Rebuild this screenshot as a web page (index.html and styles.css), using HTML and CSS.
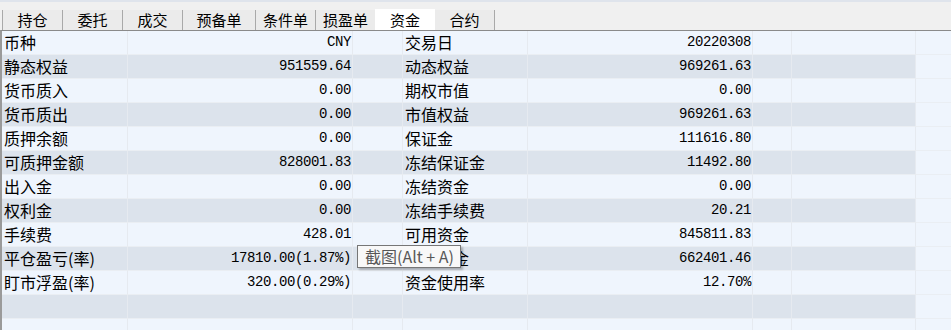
FILE: index.html
```html
<!DOCTYPE html>
<html>
  <head>
    <meta charset="utf-8">
    <link rel="stylesheet" href="styles.css">
  </head>
  <body>
    <div class="topline"></div>
    <div class="tabs">
      <div class="tab">持仓</div>
      <div class="tab">委托</div>
      <div class="tab">成交</div>
      <div class="tab wide">预备单</div>
      <div class="tab">条件单</div>
      <div class="tab">损盈单</div>
      <div class="tab active">资金</div>
      <div class="tab">合约</div>
    </div>
    <div class="grid">
      <div class="row">
        <div class="c lbl">币种</div><div class="c num">CNY</div><div class="c"></div>
        <div class="c lbl">交易日</div><div class="c num">20220308</div><div class="c"></div><div class="c"></div><div class="c tail"></div>
      </div>
      <div class="row">
        <div class="c lbl">静态权益</div><div class="c num">951559.64</div><div class="c"></div>
        <div class="c lbl">动态权益</div><div class="c num">969261.63</div><div class="c"></div><div class="c"></div><div class="c tail"></div>
      </div>
      <div class="row">
        <div class="c lbl">货币质入</div><div class="c num">0.00</div><div class="c"></div>
        <div class="c lbl">期权市值</div><div class="c num">0.00</div><div class="c"></div><div class="c"></div><div class="c tail"></div>
      </div>
      <div class="row">
        <div class="c lbl">货币质出</div><div class="c num">0.00</div><div class="c"></div>
        <div class="c lbl">市值权益</div><div class="c num">969261.63</div><div class="c"></div><div class="c"></div><div class="c tail"></div>
      </div>
      <div class="row">
        <div class="c lbl">质押余额</div><div class="c num">0.00</div><div class="c"></div>
        <div class="c lbl">保证金</div><div class="c num">111616.80</div><div class="c"></div><div class="c"></div><div class="c tail"></div>
      </div>
      <div class="row">
        <div class="c lbl">可质押金额</div><div class="c num">828001.83</div><div class="c"></div>
        <div class="c lbl">冻结保证金</div><div class="c num">11492.80</div><div class="c"></div><div class="c"></div><div class="c tail"></div>
      </div>
      <div class="row">
        <div class="c lbl">出入金</div><div class="c num">0.00</div><div class="c"></div>
        <div class="c lbl">冻结资金</div><div class="c num">0.00</div><div class="c"></div><div class="c"></div><div class="c tail"></div>
      </div>
      <div class="row">
        <div class="c lbl">权利金</div><div class="c num">0.00</div><div class="c"></div>
        <div class="c lbl">冻结手续费</div><div class="c num">20.21</div><div class="c"></div><div class="c"></div><div class="c tail"></div>
      </div>
      <div class="row">
        <div class="c lbl">手续费</div><div class="c num">428.01</div><div class="c"></div>
        <div class="c lbl">可用资金</div><div class="c num">845811.83</div><div class="c"></div><div class="c"></div><div class="c tail"></div>
      </div>
      <div class="row">
        <div class="c lbl">平仓盈亏(率)</div><div class="c num">17810.00(1.87%)</div><div class="c"></div>
        <div class="c lbl">可取资金</div><div class="c num">662401.46</div><div class="c"></div><div class="c"></div><div class="c tail"></div>
      </div>
      <div class="row">
        <div class="c lbl">盯市浮盈(率)</div><div class="c num">320.00(0.29%)</div><div class="c"></div>
        <div class="c lbl">资金使用率</div><div class="c num">12.70%</div><div class="c"></div><div class="c"></div><div class="c tail"></div>
      </div>
      <div class="row">
        <div class="c"></div><div class="c"></div><div class="c"></div>
        <div class="c"></div><div class="c"></div><div class="c"></div><div class="c"></div><div class="c tail"></div>
      </div>
      <div class="row">
        <div class="c"></div><div class="c"></div><div class="c"></div>
        <div class="c"></div><div class="c"></div><div class="c"></div><div class="c"></div><div class="c tail"></div>
      </div>
      <div class="tooltip">截图(Alt + A)</div>
    </div>
  </body>
</html>
```

FILE: styles.css
```css
html, body {
  margin: 0;
  padding: 0;
}
body {
  width: 951px;
  height: 330px;
  overflow: hidden;
  background: #f0f0f0;
  color: #000;
  font-family: "Noto Sans CJK SC", "Liberation Sans", sans-serif;
}

.topline {
  height: 2px;
  background: #dfe4ec;
}

.tabs {
  display: flex;
  height: 21px;
  margin: 7px 0 0 2px;
  align-items: flex-end;
}
.tab {
  width: 60px;
  height: 20px;
  box-sizing: border-box;
  border-left: 1px solid #a9a9a9;
  background: #ebebeb;
  font-size: 15px;
  line-height: 20px;
  text-align: center;
}
.tab.wide {
  width: 73px;
}
.tab.active {
  height: 22px;
  margin-bottom: -1px;
  background: #fff;
  border-left: 0;
  line-height: 22px;
}
.tab.active + .tab {
  border-left: 0;
  border-right: 1px solid #a9a9a9;
}

.grid {
  position: relative;
  border-top: 1px solid #8a8a8a;
  border-left: 2px solid #9a9a9a;
  box-sizing: border-box;
}
.row {
  display: grid;
  grid-template-columns: 126px 225px 50px 125px 225px 39px 124px 1fr;
  height: 24px;
  background: #eff5fd;
}
.row:nth-child(even) {
  background: #dce3ec;
}
.c {
  box-sizing: border-box;
  border-right: 1px solid #e6eaf0;
  border-bottom: 1px solid #eaeef3;
  font-size: 16px;
  line-height: 23px;
  white-space: nowrap;
  overflow: hidden;
}
.c.lbl {
  padding-left: 2px;
}
.c.num {
  text-align: right;
  font-family: "Liberation Mono", "DejaVu Sans Mono", monospace;
  font-size: 14px;
  letter-spacing: -0.4px;
  padding-right: 1px;
}
.c.tail {
  background: #eff5fd;
  border-right: 0;
}

.tooltip {
  position: absolute;
  left: 355px;
  top: 214px;
  height: 21px;
  padding: 0 6px 0 7px;
  background: #f8f8f8;
  border: 1px solid #767676;
  box-shadow: 2px 2px 2px rgba(0, 0, 0, 0.25);
  color: #575757;
  font-family: "Noto Sans CJK SC", "Liberation Sans", sans-serif;
  font-size: 16px;
  line-height: 21px;
  white-space: nowrap;
}
```
